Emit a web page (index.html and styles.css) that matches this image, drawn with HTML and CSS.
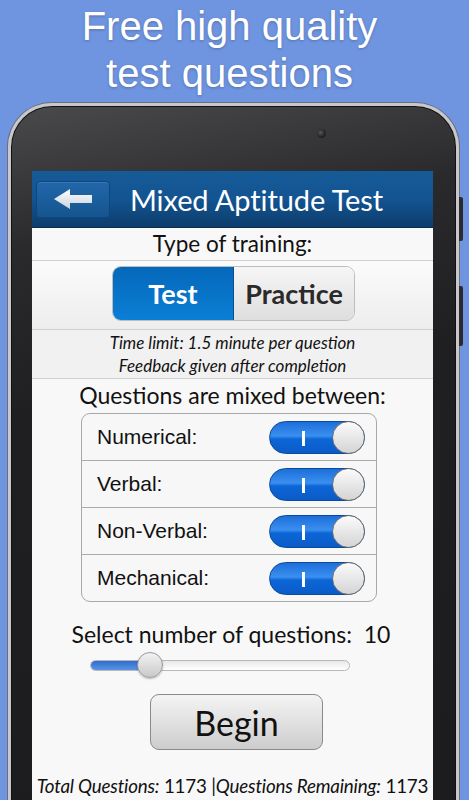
FILE: index.html
```html
<!DOCTYPE html>
<html>
<head>
<meta charset="utf-8">
<link rel="stylesheet" href="styles.css">
</head>
<body>
<h1 class="headline">Free high quality<br>test questions</h1>
<div class="device">
  <span class="camera"></span>
  <span class="side-btn side-btn-a"></span>
  <span class="side-btn side-btn-b"></span>
  <div class="screen">
    <div class="appbar">
      <button class="back">
        <svg width="40" height="22" viewBox="0 0 40 22"><defs><linearGradient id="ag" x1="0" y1="0" x2="0" y2="1"><stop offset="0" stop-color="#ffffff"/><stop offset="1" stop-color="#c9d2de"/></linearGradient></defs><path d="M1 11 L17 1 L17 7 L39 7 L39 15 L17 15 L17 21 Z" fill="url(#ag)"/></svg>
      </button>
      <div class="apptitle">Mixed Aptitude Test</div>
    </div>
    <div class="label-row">Type of training:</div>
    <div class="seg-area">
      <div class="seg">
        <div class="seg-item seg-on">Test</div>
        <div class="seg-item seg-off">Practice</div>
      </div>
    </div>
    <div class="info">
      <div>Time limit: 1.5 minute per question</div>
      <div>Feedback given after completion</div>
    </div>
    <div class="label-row plain">Questions are mixed between:</div>
    <div class="table">
      <div class="trow"><span>Numerical:</span><span class="toggle"><span class="tbar"></span><span class="knob"></span></span></div>
      <div class="trow"><span>Verbal:</span><span class="toggle"><span class="tbar"></span><span class="knob"></span></span></div>
      <div class="trow"><span>Non-Verbal:</span><span class="toggle"><span class="tbar"></span><span class="knob"></span></span></div>
      <div class="trow"><span>Mechanical:</span><span class="toggle"><span class="tbar"></span><span class="knob"></span></span></div>
    </div>
    <div class="select-label">Select number of questions:&nbsp; 10</div>
    <div class="slider"><div class="fill" style="width:60px"></div><div class="thumb"></div></div>
    <div class="begin-wrap"><button class="begin">Begin</button></div>
    <div class="totals"><i>Total Questions:</i> 1173 |<i>Questions Remaining:</i> 1173</div>
  </div>
</div>
</body>
</html>
```
FILE: styles.css
```css
html, body {
  margin: 0;
  padding: 0;
  height: 800px;
  overflow: hidden;
}
body {
  background: #6f95e1;
  font-family: "Lato", "Open Sans", sans-serif;
}
.headline {
  margin: 0;
  height: 103px;
  padding: 3px 10px 0 0;
  box-sizing: border-box;
  font-family: "Liberation Sans", Arial, sans-serif;
  font-weight: normal;
  font-size: 40px;
  line-height: 47px;
  color: #fff;
  text-align: center;
  text-shadow: 0 1px 3px rgba(0,0,0,0.25);
}
.device {
  position: relative;
  margin-left: 8px;
  width: 451px;
  height: 720px;
  box-sizing: border-box;
  border-radius: 44px 44px 0 0;
  border: 3px solid #c8c8cc;
  border-bottom: none;
  background: linear-gradient(170deg, #4a4a4d 0%, #2a2a2c 18%, #1f1f21 40%, #1c1c1e 100%);
  box-shadow: inset 0 0 0 1px #111, 0 0 0 1px #6d6f75;
  padding: 65px 23px 0 21px;
}
.camera {
  position: absolute;
  left: 306px;
  top: 23px;
  width: 9px;
  height: 9px;
  border-radius: 50%;
  background: radial-gradient(circle at 40% 40%, #555 0%, #222 60%, #111 100%);
}
.side-btn {
  position: absolute;
  right: -7px;
  width: 4px;
  background: #2b2b2d;
  border-radius: 0 2px 2px 0;
}
.side-btn-a { top: 91px; height: 44px; }
.side-btn-b { top: 180px; height: 60px; }
.screen {
  background: #f8f8f8;
  height: 100%;
  display: flex;
  flex-direction: column;
  color: #111;
}
.appbar {
  height: 56px;
  background: linear-gradient(#155b98 0%, #135492 50%, #0d3d6c 100%);
  display: flex;
  align-items: center;
  padding-left: 4px;
  border-bottom: 1px solid #0a2e52;
}
.back {
  width: 74px;
  height: 37px;
  border-radius: 4px;
  border: 1px solid #0e4680;
  background: linear-gradient(#2167aa, #15558f);
  box-shadow: inset 0 1px 0 rgba(255,255,255,0.12);
  display: flex;
  align-items: center;
  justify-content: center;
  padding: 0;
}
.apptitle {
  margin-left: 20px;
  color: #fff;
  font-size: 29px;
  letter-spacing: -0.1px;
}
.label-row {
  height: 33px;
  line-height: 32px;
  text-align: center;
  font-size: 22.5px;
  border-bottom: 1px solid #cfcfcf;
  box-sizing: border-box;
}
.label-row.plain {
  border-bottom: none;
  height: 33px;
  font-size: 23px;
}
.seg-area {
  height: 69px;
  border-bottom: 1px solid #cfcfcf;
  background: linear-gradient(#fbfbfb, #ededed);
  display: flex;
  justify-content: center;
  align-items: flex-start;
  padding-top: 5px;
  box-sizing: border-box;
  padding-left: 2px;
}
.seg {
  display: flex;
  width: 243px;
  height: 55px;
  border-radius: 9px;
  border: 1px solid #bdbdbd;
  overflow: hidden;
  box-sizing: border-box;
}
.seg-item {
  flex: 1;
  display: flex;
  align-items: center;
  justify-content: center;
  font-size: 27px;
  font-weight: bold;
}
.seg-on {
  background: linear-gradient(#0568ba, #0a7fd6);
  color: #fff;
  border-right: 1px solid #0a4f90;
}
.seg-off {
  background: linear-gradient(#f6f6f6, #dedede);
  color: #2a2a2a;
}
.info {
  height: 49px;
  background: #f1f1f1;
  border-bottom: 1px solid #cfcfcf;
  box-sizing: border-box;
  text-align: center;
  font-style: italic;
  font-size: 17px;
  line-height: 23px;
  padding-top: 1px;
}
.table {
  margin: 1px 0 0 49px;
  width: 296px;
  border: 1px solid #a8a8a8;
  border-radius: 9px;
  background: #f7f7f7;
  box-sizing: border-box;
}
.trow {
  height: 47px;
  display: flex;
  align-items: center;
  justify-content: space-between;
  padding: 0 11px 0 15px;
  border-top: 1px solid #ababab;
  font-family: "Liberation Sans", Arial, sans-serif;
  font-size: 21px;
  color: #111;
  box-sizing: border-box;
}
.trow:first-child { border-top: none; height: 46px; }
.toggle {
  position: relative;
  width: 96px;
  height: 33px;
  border-radius: 17px;
  background: linear-gradient(#1c6fd8 0%, #3b8ff0 45%, #0d66d6 55%, #0a5bc8 100%);
  border: 1px solid #0b4a9a;
  box-sizing: border-box;
}
.tbar {
  position: absolute;
  left: 32px;
  top: 9px;
  width: 3px;
  height: 15px;
  background: #fff;
}
.knob {
  position: absolute;
  right: -1px;
  top: -1px;
  width: 33px;
  height: 33px;
  border-radius: 50%;
  background: linear-gradient(#fbfbfb, #d4d4d4);
  border: 1px solid #6d6d6d;
  box-sizing: border-box;
}
.select-label {
  margin-top: 19px;
  text-align: center;
  font-size: 23px;
  line-height: 26px;
  padding-right: 3px;
}
.slider {
  position: relative;
  margin: 13px 0 0 58px;
  width: 260px;
  height: 11px;
  border-radius: 6px;
  border: 1px solid #b8b8b8;
  background: linear-gradient(#e8e8e8, #ffffff);
  box-sizing: border-box;
}
.fill {
  height: 100%;
  border-radius: 6px 0 0 6px;
  background: linear-gradient(#2f6ccc, #5a93e6);
}
.thumb {
  position: absolute;
  left: 46px;
  top: -9px;
  width: 26px;
  height: 26px;
  border-radius: 50%;
  background: linear-gradient(#f2f2f2, #c9c9c9);
  border: 1px solid #9a9a9a;
  box-sizing: border-box;
  box-shadow: 0 1px 2px rgba(0,0,0,0.25);
}
.begin-wrap {
  display: flex;
  justify-content: center;
  margin-top: 23px;
  padding-left: 8px;
}
.begin {
  width: 173px;
  height: 56px;
  border-radius: 9px;
  border: 1px solid #8a8a8a;
  background: linear-gradient(#f4f4f4, #cdcdcd);
  font-family: "Lato", "Open Sans", sans-serif;
  font-size: 34px;
  color: #111;
  padding: 0;
}
.totals {
  margin-top: 24px;
  text-align: center;
  font-size: 18.8px;
  white-space: nowrap;
  letter-spacing: -0.2px;
}
```
